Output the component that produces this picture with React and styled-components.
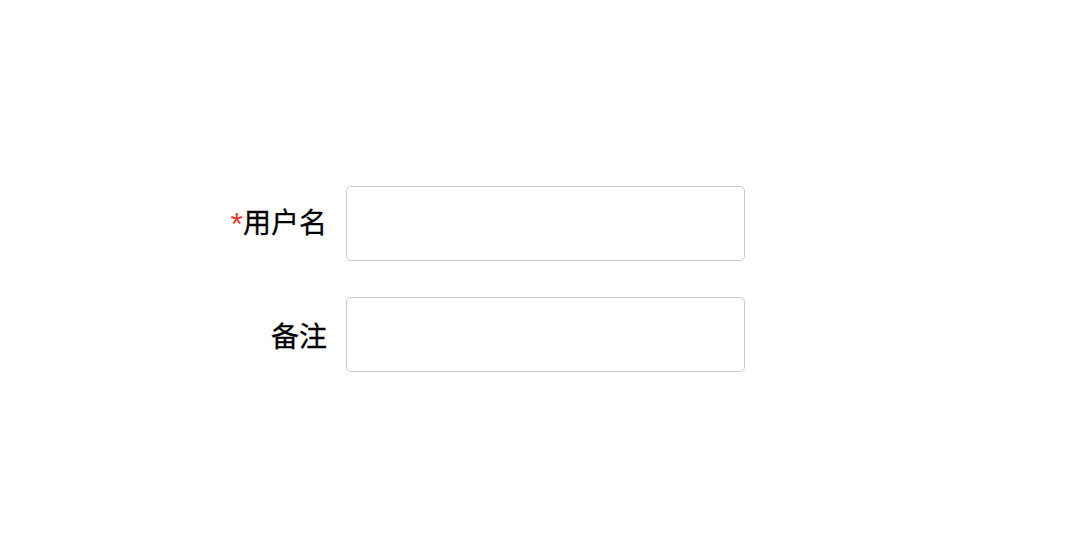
import React from "react";
import styled, { createGlobalStyle } from "styled-components";

const GlobalStyle = createGlobalStyle`
  html, body {
    margin: 0;
    padding: 0;
    background: #fff;
  }
  body {
    font-family: "Noto Sans CJK SC", "Noto Sans", sans-serif;
    color: #000;
  }
`;

const Page = styled.div`
  width: 1080px;
  height: 538px;
  padding-top: 186px;
  box-sizing: border-box;
`;

const Form = styled.form`
  display: flex;
  flex-direction: column;
  gap: 36px;
  margin-left: 207px;
`;

const Row = styled.div`
  display: flex;
  align-items: center;
  gap: 19px;
`;

const Label = styled.label`
  width: 120px;
  text-align: right;
  font-size: 28px;
  font-weight: 400;
  line-height: 1;
  color: #000;
  -webkit-text-stroke: 0.3px #000;
`;

const Star = styled.span`
  color: #e8352e;
  font-family: "Liberation Sans", sans-serif;
  font-size: 32px;
  -webkit-text-stroke: 0;
  vertical-align: -2px;
`;

const Input = styled.input`
  width: 399px;
  height: 75px;
  box-sizing: border-box;
  border: 1.5px solid #cbcbcb;
  border-radius: 5px;
  background: #fff;
  padding: 0 12px;
  font-size: 20px;
  outline: none;
`;

export default function App() {
  return (
    <>
      <GlobalStyle />
      <Page>
        <Form>
          <Row>
            <Label htmlFor="username">
              <Star>*</Star>用户名
            </Label>
            <Input id="username" />
          </Row>
          <Row>
            <Label htmlFor="remark">备注</Label>
            <Input id="remark" />
          </Row>
        </Form>
      </Page>
    </>
  );
}
